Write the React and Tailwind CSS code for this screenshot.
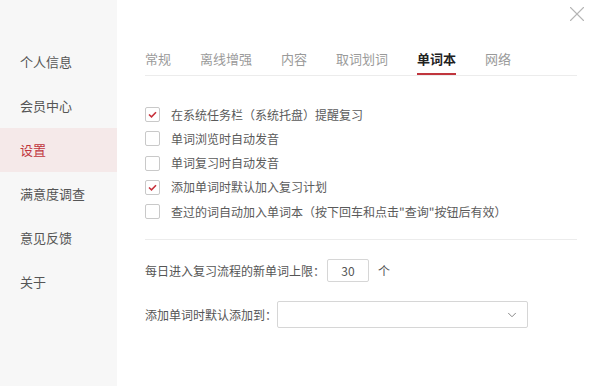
import { X, ChevronDown } from 'lucide-react';

const FONT = { fontFamily: '"Noto Sans CJK SC", "Liberation Sans", sans-serif' };

const MENU = ['个人信息', '会员中心', '设置', '满意度调查', '意见反馈', '关于'];
const TABS = ['常规', '离线增强', '内容', '取词划词', '单词本', '网络'];
const OPTIONS = [
  { label: '在系统任务栏（系统托盘）提醒复习', checked: true },
  { label: '单词浏览时自动发音', checked: false },
  { label: '单词复习时自动发音', checked: false },
  { label: '添加单词时默认加入复习计划', checked: true },
  { label: '查过的词自动加入单词本（按下回车和点击"查询"按钮后有效）', checked: false },
];

function Checkbox({ checked }) {
  return (
    <div className="w-[15px] h-[15px] rounded-[2px] border border-[#c9c9c9] bg-white flex items-center justify-center shrink-0">
      {checked && (
        <svg width="9" height="7" viewBox="0 0 9 7">
          <path d="M1 3.5 L3.5 5.8 L8 1.2" fill="none" stroke="#c8323c" strokeWidth="1.6" />
        </svg>
      )}
    </div>
  );
}

export default function App() {
  return (
    <div className="w-[600px] h-[386px] flex bg-white text-[#555]" style={FONT}>
      <div className="w-[117px] bg-[#f7f7f7] pt-[40px] flex flex-col">
        {MENU.map((m) => (
          <div
            key={m}
            className={`h-[44px] pl-[20px] flex items-center text-[13px] ${
              m === '设置' ? 'bg-[#f5e9e9] text-[#c0353d]' : 'text-[#555]'
            }`}
          >
            {m}
          </div>
        ))}
      </div>

      <div className="flex-1 relative pl-[28px] pr-[23px]">
        <X className="absolute right-[10px] top-[1px] text-[#b5b5b5]" size={26} strokeWidth={1} />

        <div className="mt-[46px] flex border-b border-[#ececec] h-[30px]">
          {TABS.map((t) => (
            <div
              key={t}
              className={`mr-[29px] text-[13px] leading-[26px] ${
                t === '单词本' ? 'font-bold text-[#222] border-b-2 border-[#c0353d]' : 'text-[#9a9a9a]'
              }`}
            >
              {t}
            </div>
          ))}
        </div>

        <div className="mt-[31px] flex flex-col gap-[9.3px]">
          {OPTIONS.map((o) => (
            <div key={o.label} className="flex items-center h-[15px] text-[12px] text-[#5a5a5a]">
              <Checkbox checked={o.checked} />
              <span className="ml-[11px]">{o.label}</span>
            </div>
          ))}
        </div>

        <div className="mt-[20px] border-t border-[#ececec]" />

        <div className="mt-[19px] flex items-center text-[12px]">
          <span>每日进入复习流程的新单词上限：</span>
          <div className="ml-[2px] w-[42px] h-[23px] border border-[#d6d6d6] rounded-[2px] flex items-center justify-center text-[#555]">
            30
          </div>
          <span className="ml-[9px]">个</span>
        </div>

        <div className="mt-[19px] flex items-center text-[12px]">
          <span>添加单词时默认添加到：</span>
          <div className="w-[251px] h-[27px] border border-[#d6d6d6] rounded-[2px] flex items-center justify-end pr-[8px]">
            <ChevronDown size={14} className="text-[#777]" strokeWidth={1.5} />
          </div>
        </div>
      </div>
    </div>
  );
}
